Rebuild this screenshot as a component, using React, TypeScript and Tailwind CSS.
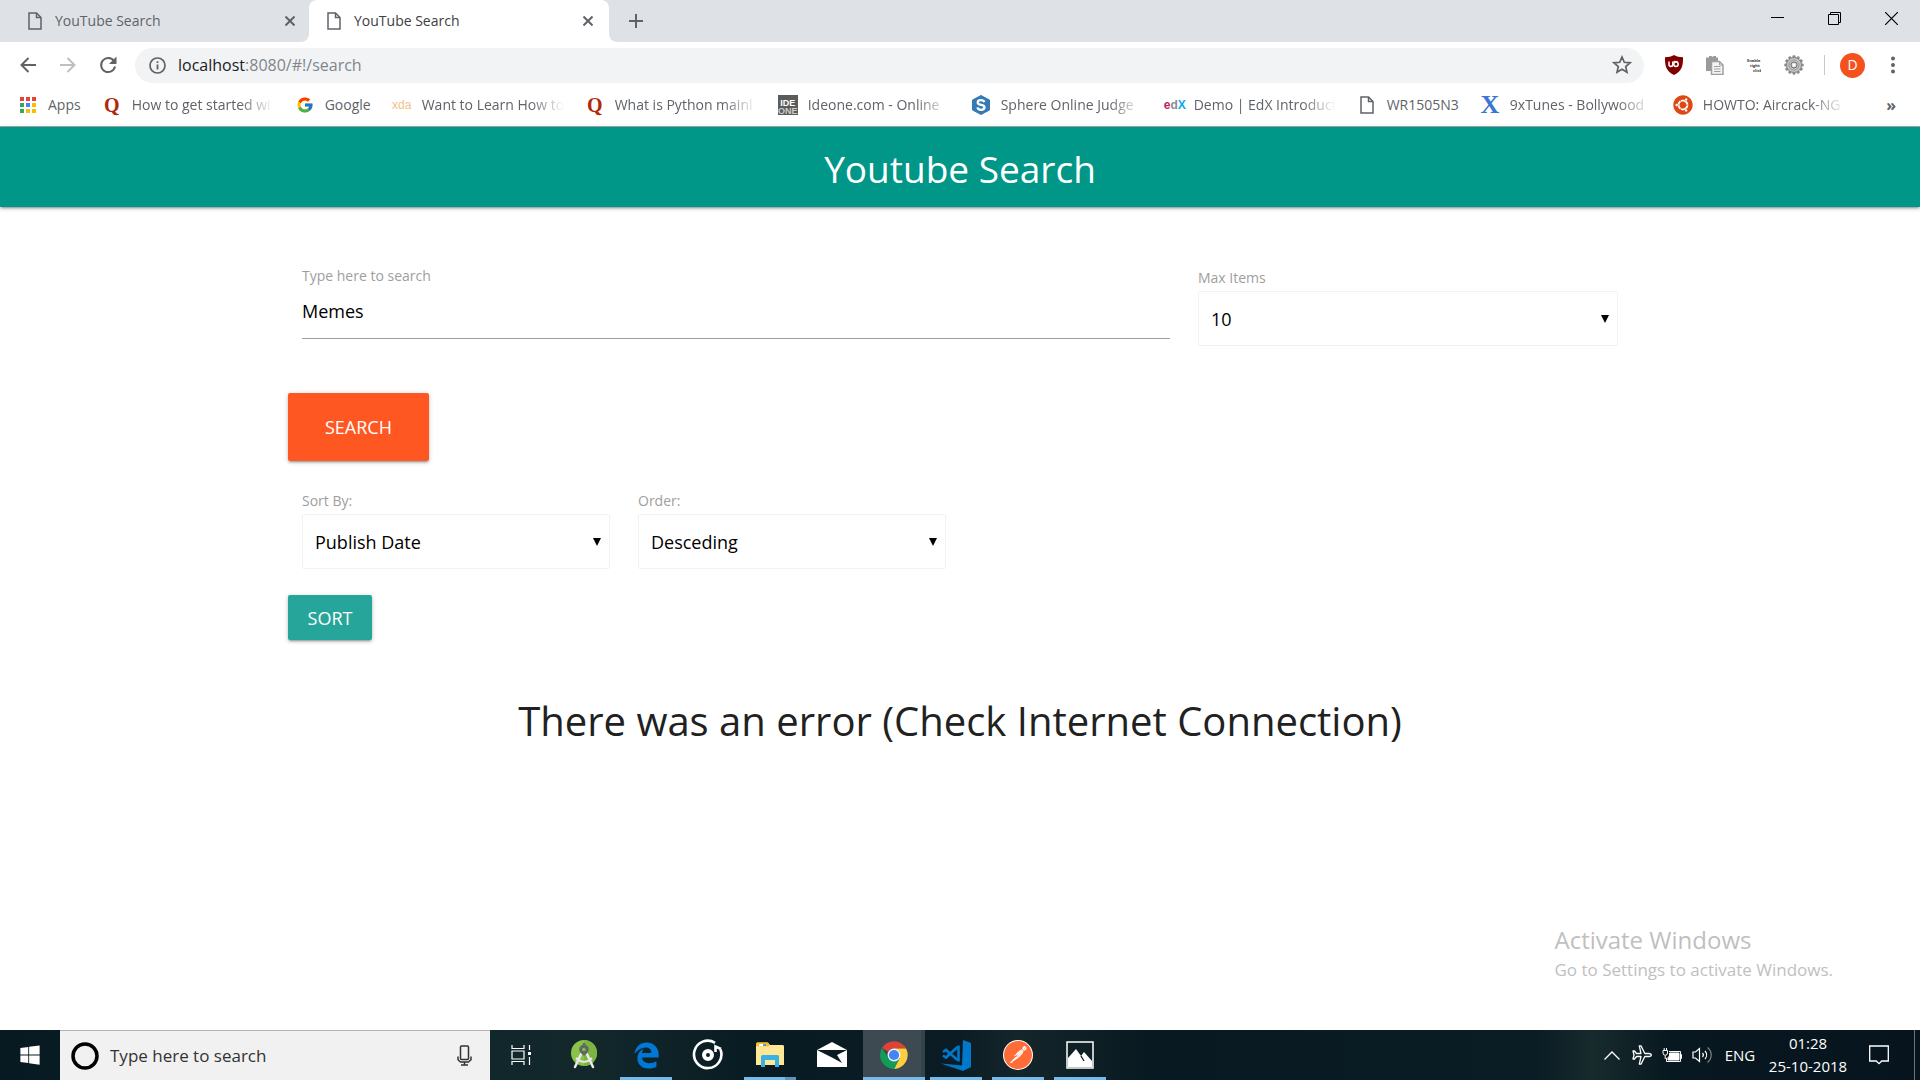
import type { ReactNode } from "react";
import { FcGoogle } from "react-icons/fc";
import { FaUbuntu, FaWindows } from "react-icons/fa";
import { FaEdgeLegacy } from "react-icons/fa6";
import { SiPostman } from "react-icons/si";

function FileIcon() {
  return (
    <svg width="14" height="18" viewBox="0 0 14 18" fill="none" stroke="#5f6368" strokeWidth="1.5">
      <path d="M1 1h7.5L13 5.5V17H1z" />
      <path d="M8.5 1v4.5H13" />
    </svg>
  );
}

function CloseIcon() {
  return (
    <svg width="10" height="10" viewBox="0 0 10 10" stroke="#5f6368" strokeWidth="2">
      <path d="M0.5 0.5l9 9M9.5 0.5l-9 9" />
    </svg>
  );
}

function Tab({ title, active }: { title: string; active?: boolean }) {
  return (
    <div
      className={
        active
          ? "relative flex h-full w-[300px] items-center rounded-t-lg bg-white pr-4 pl-[18px] text-[#3c4043]"
          : "flex h-full w-[300px] items-center pr-[14px] pl-[19px] text-[#5f6368]"
      }
    >
      {active && (
        <>
          <svg className="absolute bottom-0 -left-2" width="8" height="8" viewBox="0 0 8 8">
            <path d="M8 0v8H0a8 8 0 0 0 8-8z" fill="#fff" />
          </svg>
          <svg className="absolute -right-2 bottom-0" width="8" height="8" viewBox="0 0 8 8">
            <path d="M0 0v8h8a8 8 0 0 1-8-8z" fill="#fff" />
          </svg>
        </>
      )}
      <FileIcon />
      <span className="ml-[13px] flex-1">{title}</span>
      <button aria-label="Close tab">
        <CloseIcon />
      </button>
    </div>
  );
}

function TitleBar() {
  return (
    <header className="flex h-[42px] justify-between bg-[#dee1e6] pl-[9px] text-sm">
      <div className="flex">
        <Tab title="YouTube Search" />
        <Tab title="YouTube Search" active />
        <button aria-label="New tab" className="ml-5">
          <svg width="14" height="14" viewBox="0 0 14 14" stroke="#5f6368" strokeWidth="2">
            <path d="M7 0v14M0 7h14" />
          </svg>
        </button>
      </div>
      <div className="flex h-9">
        <button aria-label="Minimize" className="grid w-[57px] place-items-center">
          <svg width="13" height="13" viewBox="0 0 13 13" stroke="#000">
            <path d="M0 5.5h13" />
          </svg>
        </button>
        <button aria-label="Restore" className="grid w-[57px] place-items-center">
          <svg width="13" height="13" viewBox="0 0 13 13" fill="none" stroke="#000">
            <path d="M0.5 2.5h10v10h-10zM2.5 2.5v-2h10v10h-2" />
          </svg>
        </button>
        <button aria-label="Close" className="grid w-[57px] place-items-center">
          <svg width="13" height="13" viewBox="0 0 13 13" stroke="#000" strokeWidth="1.2">
            <path d="M0 0l13 13M13 0L0 13" />
          </svg>
        </button>
      </div>
    </header>
  );
}

function ToolButton({ label, children }: { label: string; children: ReactNode }) {
  return (
    <button aria-label={label} className="grid h-9 w-10 place-items-center">
      {children}
    </button>
  );
}

function Shield() {
  return (
    <svg width="20" height="20" viewBox="0 0 20 20">
      <path d="M10 0c2.500 1.600 5.500 2.200 9 2.200 0.200 8-0.800 13.800-9 17.800C1.800 16 0.800 10.200 1 2.200 4.500 2.200 7.500 1.600 10 0z" fill="#800000" />
      <path d="M5 6.500v3a1.900 1.900 0 0 0 3.800 0V6.500" fill="none" stroke="#fff" strokeWidth="1.500" />
      <circle cx="12" cy="9.200" r="2.200" fill="none" stroke="#fff" strokeWidth="1.500" />
      <path d="M9.500 6.500h4" stroke="#fff" strokeWidth="1.200" />
    </svg>
  );
}

function Clipboards() {
  return (
    <svg width="19" height="20" viewBox="0 0 19 20">
      <path d="M1 2.500h3V1h2.500l1 1 1-1H11v1.500h2V6H6v10H1z" fill="#9a9a9a" />
      <path d="M6.500 6.500h8l3.500 3.500v9.500H6.500z" fill="#f4f4f4" stroke="#a0a0a0" strokeWidth="1.500" />
      <path d="M14.500 6.500V10H18" fill="none" stroke="#a0a0a0" />
      <path d="M9 11.500h6.500M9 14h6.500M9 16.500h6.500" stroke="#a0a0a0" />
    </svg>
  );
}

const TEETH = [0, 30, 60, 90, 120, 150, 180, 210, 240, 270, 300, 330];

function Gear() {
  return (
    <svg width="20" height="20" viewBox="0 0 20 20">
      {TEETH.map((a) => (
        <rect key={a} x="8.500" y="0.300" width="3" height="4" rx="1" fill="#8c8c8c" transform={`rotate(${a} 10 10)`} />
      ))}
      <circle cx="10" cy="10" r="7.500" fill="#c4c4c4" stroke="#868686" />
      <circle cx="10" cy="10" r="5" fill="none" stroke="#9a9a9a" />
      <circle cx="10" cy="10" r="3" fill="#ddd" stroke="#6f6f6f" />
      <circle cx="10" cy="10" r="1.300" fill="#fff" />
    </svg>
  );
}

function Toolbar() {
  return (
    <div className="flex h-[46px] items-center pl-2">
      <ToolButton label="Back">
        <svg width="16" height="16" viewBox="0 0 16 16" fill="none" stroke="#5f6368" strokeWidth="2">
          <path d="M16 8H1.500M8.500 1L1.500 8l7 7" />
        </svg>
      </ToolButton>
      <ToolButton label="Forward">
        <svg width="16" height="16" viewBox="0 0 16 16" fill="none" stroke="#bdc0c3" strokeWidth="2">
          <path d="M0 8h14.500M7.500 1l7 7-7 7" />
        </svg>
      </ToolButton>
      <ToolButton label="Reload">
        <svg width="18" height="18" viewBox="0 0 18 18">
          <path d="M15 5.200A7 7 0 1 0 16 10.500" fill="none" stroke="#5f6368" strokeWidth="2" />
          <path d="M17.500 0.500v7.500H10z" fill="#5f6368" />
        </svg>
      </ToolButton>
      <div className="ml-[7px] flex h-[35px] flex-1 items-center rounded-full bg-[#f1f3f4] pr-3 pl-[14px]">
        <svg width="17" height="17" viewBox="0 0 17 17" fill="none" stroke="#5f6368">
          <circle cx="8.500" cy="8.500" r="7.500" strokeWidth="1.700" />
          <path d="M8.500 7.500v5M8.500 4.200V6" strokeWidth="1.800" />
        </svg>
        <div className="ml-3 flex-1 text-base text-[#80868b]">
          <span className="text-[#202124]">localhost</span>:8080/#!/search
        </div>
        <button aria-label="Bookmark this page">
          <svg width="20" height="20" viewBox="0 0 20 20" fill="none" stroke="#5f6368" strokeWidth="1.700">
            <path d="M10 2l2.300 5.300 5.700.5-4.300 3.800 1.300 5.700-5-3-5 3 1.300-5.700L2 7.800l5.700-.5z" />
          </svg>
        </button>
      </div>
      <div className="ml-[10px] flex items-center">
        <ToolButton label="uBlock Origin">
          <Shield />
        </ToolButton>
        <ToolButton label="Copy">
          <Clipboards />
        </ToolButton>
        <ToolButton label="Enable right click">
          <svg width="14" height="15" viewBox="0 0 14 15" fill="#333">
            <text x="0" y="4" fontSize="4" fontWeight="700">Enable</text>
            <text x="3" y="9" fontSize="4" fontWeight="700">right</text>
            <text x="6" y="14" fontSize="4" fontWeight="700">click</text>
          </svg>
        </ToolButton>
        <ToolButton label="Settings extension">
          <Gear />
        </ToolButton>
      </div>
      <div className="ml-[10px] h-5 w-px bg-[#c6c9cc]" />
      <button aria-label="Profile" className="ml-[15px] grid size-[25px] place-items-center rounded-full bg-[#f4511e] text-sm text-white">
        D
      </button>
      <button aria-label="Menu" className="mr-[25px] ml-[26px]">
        <svg width="4" height="18" viewBox="0 0 4 18" fill="#5f6368">
          <circle cx="2" cy="2.500" r="2" />
          <circle cx="2" cy="9" r="2" />
          <circle cx="2" cy="15.500" r="2" />
        </svg>
      </button>
    </div>
  );
}

function Bookmark({ icon, text, cut }: { icon: ReactNode; text: string; cut?: boolean }) {
  return (
    <a href="#" className="flex shrink-0 items-center gap-[10px]">
      <span className="grid h-5 w-5 place-items-center">{icon}</span>
      <span
        className={
          cut
            ? "w-[142px] overflow-hidden whitespace-nowrap [mask-image:linear-gradient(to_right,black_108px,transparent_142px)]"
            : "whitespace-nowrap"
        }
      >
        {text}
      </span>
    </a>
  );
}

const APP_DOTS = ["#ea4335", "#ea4335", "#ea4335", "#34a853", "#4285f4", "#fbbc05", "#34a853", "#fbbc05", "#fbbc05"];

function AppsIcon() {
  return (
    <svg width="16" height="16" viewBox="0 0 16 16">
      {APP_DOTS.map((c, i) => (
        <rect key={i} x={(i % 3) * 6} y={Math.floor(i / 3) * 6} width="4" height="4" fill={c} />
      ))}
    </svg>
  );
}

function Quora() {
  return <span className="font-['Liberation_Serif',serif] text-xl leading-5 font-bold text-[#b1290b]">Q</span>;
}

function Bookmarks() {
  return (
    <nav className="flex h-[39px] items-center justify-between border-b border-[#a5a9ab] bg-white pr-6 pb-1 pl-[18px] text-sm text-[#5f6368]">
      <div className="flex gap-[21px]">
        <Bookmark icon={<AppsIcon />} text="Apps" />
        <Bookmark icon={<Quora />} text="How to get started wi" cut />
        <Bookmark icon={<FcGoogle size={18} />} text="Google" />
        <Bookmark
          icon={<span className="font-['Liberation_Sans',sans-serif] text-xs leading-5 text-[#f5c08a]">xda</span>}
          text="Want to Learn How to"
          cut
        />
        <Bookmark icon={<Quora />} text="What is Python mainl" cut />
        <Bookmark
          icon={
            <span className="flex size-5 flex-col items-center justify-end bg-[#5b5b5b] font-['Liberation_Sans',sans-serif] text-[9px] leading-[8px] font-bold text-white">
              <span>IDE</span>
              <span className="text-[#ccc]">ONE</span>
            </span>
          }
          text="Ideone.com - Online"
          cut
        />
        <Bookmark
          icon={
            <svg width="20" height="20" viewBox="0 0 20 20">
              <path d="M10 0.500l8.500 4.500v10L10 19.500 1.500 15V5z" fill="#337ab7" stroke="#337ab7" strokeLinejoin="round" />
              <path d="M13.300 7.200c-.5-1.500-1.700-2-3.300-2-2 0-3.300.9-3.300 2.300 0 3.300 6.800 1.400 6.800 4.800 0 1.500-1.400 2.500-3.500 2.500-1.800 0-3.200-.7-3.500-2.400" fill="none" stroke="#fff" strokeWidth="2.300" />
            </svg>
          }
          text="Sphere Online Judge"
          cut
        />
        <Bookmark
          icon={
            <span className="font-['Liberation_Sans',sans-serif] text-xs leading-5 font-bold">
              <span className="text-[#b72667]">e</span>
              <span className="text-[#8a8c8f]">d</span>
              <span className="text-[#0ea6e9]">X</span>
            </span>
          }
          text="Demo | EdX Introduct"
          cut
        />
        <Bookmark icon={<FileIcon />} text="WR1505N3" />
        <Bookmark
          icon={
            <span className="font-['Liberation_Serif',serif] text-[26px] leading-5 font-bold text-[#3a76d6]">X</span>
          }
          text="9xTunes - Bollywood"
          cut
        />
        <Bookmark icon={<FaUbuntu size={20} color="#dd4814" />} text="HOWTO: Aircrack-NG" cut />
      </div>
      <button aria-label="More bookmarks" className="text-base font-bold">
        »
      </button>
    </nav>
  );
}

function SelectField({ id, label, options }: { id: string; label: string; options: string[] }) {
  return (
    <div>
      <label htmlFor={id} className="block text-sm leading-5 text-[#9e9e9e]">
        {label}
      </label>
      <div className="relative mt-[3px]">
        <select
          id={id}
          className="h-[55px] w-full appearance-none rounded-xs border border-[#f2f2f2] bg-white px-3 text-lg text-black"
        >
          {options.map((o) => (
            <option key={o}>{o}</option>
          ))}
        </select>
        <svg className="pointer-events-none absolute top-6 right-[9px]" width="8" height="8" viewBox="0 0 8 8">
          <path d="M0 0h8L4 8z" />
        </svg>
      </div>
    </div>
  );
}

const RAISED = "rounded-xs text-white uppercase shadow-[0_2px_2px_rgba(0,0,0,0.14),0_3px_1px_-2px_rgba(0,0,0,0.12),0_1px_5px_rgba(0,0,0,0.2)]";

function SearchPage() {
  return (
    <div className="relative flex-1 bg-white">
      <div className="relative grid h-20 place-items-center bg-[#009688] pt-1 shadow-[0_2px_2px_rgba(0,0,0,0.14),0_3px_1px_-2px_rgba(0,0,0,0.12),0_1px_5px_rgba(0,0,0,0.2)]">
        <h1 className="text-[37px] leading-10 text-white">Youtube Search</h1>
      </div>
      <main className="mx-auto w-[70%] pt-[59px]">
        <div className="grid grid-cols-12">
          <div className="col-span-8 px-[14px]">
            <label htmlFor="query" className="block text-sm leading-5 text-[#9e9e9e]">
              Type here to search
            </label>
            <input
              id="query"
              defaultValue="Memes"
              className="block h-[53px] w-full border-b border-[#9e9e9e] pb-[3px] text-lg text-black outline-none"
            />
          </div>
          <div className="col-span-4 px-[14px] pt-[2px]">
            <SelectField id="max" label="Max Items" options={["10", "20", "50"]} />
          </div>
        </div>
        <button className={`mt-[47px] block h-[68px] w-[141px] bg-[#ff5722] text-lg ${RAISED}`}>Search</button>
        <div className="mt-[30px] grid grid-cols-4">
          <div className="px-[14px]">
            <SelectField id="sort" label="Sort By:" options={["Publish Date", "Title"]} />
          </div>
          <div className="px-[14px]">
            <SelectField id="order" label="Order:" options={["Desceding", "Ascending"]} />
          </div>
        </div>
        <button className={`mt-[26px] block h-[45px] w-[84px] bg-[#26a69a] text-lg ${RAISED}`}>Sort</button>
        <h2 className="mt-14 text-center text-[40px] leading-[50px] text-[#212121]">
          There was an error (Check Internet Connection)
        </h2>
      </main>
      <div className="absolute right-[87px] bottom-[46px] text-[#bfbfbf]">
        <p className="text-2xl leading-8">Activate Windows</p>
        <p className="text-[17px] leading-7">Go to Settings to activate Windows.</p>
      </div>
    </div>
  );
}

function TaskApp({ label, running, multiple, active, children }: {
  label: string;
  running?: boolean;
  multiple?: boolean;
  active?: boolean;
  children: ReactNode;
}) {
  return (
    <button
      aria-label={label}
      className={
        active
          ? "relative grid w-[62px] place-items-center border-r-4 border-[#34424a] bg-[#3d4a52] pl-1"
          : "relative grid w-[62px] place-items-center"
      }
    >
      {children}
      {running && (
        <span className={active ? "absolute bottom-0 left-0 -right-1 flex h-[3px] bg-[#76b9ed]" : "absolute inset-x-[5px] bottom-0 flex h-[3px] justify-end bg-[#76b9ed]"}>
          {multiple && <span className="w-[11px] bg-[#5f93bb]" />}
        </span>
      )}
    </button>
  );
}

function AndroidStudio() {
  return (
    <svg width="28" height="32" viewBox="0 0 28 32">
      <circle cx="14" cy="14" r="13" fill="#8bc34a" />
      <path d="M14 1a13 13 0 0 1 0 26z" fill="#7cb342" />
      <path d="M12 13L5 28M16 13l7 15" stroke="#e8e8e8" strokeWidth="2.500" strokeLinecap="round" />
      <path d="M6 19c5 5 11 5 16 0" fill="none" stroke="#e8e8e8" strokeWidth="2" />
      <circle cx="14" cy="10.500" r="3.300" fill="none" stroke="#5c6a60" strokeWidth="3" />
      <path d="M14 4v3" stroke="#5c6a60" strokeWidth="2.500" />
      <path d="M11 14l3 3 3-3" fill="#5c6a60" />
    </svg>
  );
}

function Groove() {
  return (
    <svg width="32" height="32" viewBox="0 0 32 32" fill="none" stroke="#fff">
      <path d="M23 3.800A13.700 13.700 0 1 0 28.500 10.500" strokeWidth="2.600" />
      <path d="M23.500 13V7.500l5.500 2.500" strokeWidth="2.600" />
      <circle cx="16" cy="16" r="4" strokeWidth="4" />
    </svg>
  );
}

function Explorer() {
  return (
    <svg width="28" height="26" viewBox="0 0 28 26">
      <path d="M0 2a1.500 1.500 0 0 1 1.500-1.500H12L14 3h12.500A1.500 1.500 0 0 1 28 4.500V23H0z" fill="#ffe796" />
      <path d="M0 4V2A1.500 1.500 0 0 1 1.500.5h10L13.500 3 12 4.500z" fill="#f9bd1a" />
      <path d="M3 2h6v2H3z" fill="#fff" />
      <path d="M7 2h3v2H7z" fill="#4aa4dc" />
      <path d="M5 25V14.500A1.500 1.500 0 0 1 6.500 13h15a1.500 1.500 0 0 1 1.500 1.500V25h-4v-7H9v7z" fill="#38b1e4" />
    </svg>
  );
}

function Mail() {
  return (
    <svg width="30" height="28" viewBox="0 0 30 28" fill="#fff">
      <path d="M0 9L15 1l15 8H0z" />
      <path d="M0 9l16 8 9 5-5-8 10-5v17H0z" />
    </svg>
  );
}

function Chrome() {
  return (
    <svg width="28" height="28" viewBox="0 0 28 28">
      <path d="M14 14L1.900 7A14 14 0 0 1 26.100 7.500H14z" fill="#db4437" />
      <path d="M26.100 7.500A14 14 0 0 1 14 28l5.600-10.800L14 7.500z" fill="#ffcd40" />
      <path d="M1.900 7A14 14 0 0 0 14 28l5.600-10.800L8.400 17.200z" fill="#0f9d58" />
      <circle cx="14" cy="14" r="6.500" fill="#f1f1f1" />
      <circle cx="14" cy="14" r="5.100" fill="#4285f4" />
    </svg>
  );
}

function VsCode() {
  return (
    <svg width="30" height="31" viewBox="0 0 30 31">
      <path d="M22 0l8 3v24l-8 4L0 23.500l21 2z" fill="#0079cc" />
      <path d="M16.500 7L5 17.500l-3-2M16.500 20L5 10l-3 2" fill="none" stroke="#0079cc" strokeWidth="2.600" />
      <path d="M17.500 5.500v16" stroke="#0079cc" strokeWidth="2.600" />
    </svg>
  );
}

function Taskbar() {
  return (
    <footer className="flex h-[50px] bg-[linear-gradient(to_right,#071921,#11262b_22%,#12282b_31%,#081a22_40%,#0b1c24_50%,#14262a_53%,#081921_60%,#0a1c24_80%,#172a2c_83%,#081820_87%,#07141d)] text-[15px] text-white">
      <button aria-label="Start" className="grid w-[60px] place-items-center">
        <FaWindows size={22} />
      </button>
      <label className="flex w-[430px] items-center border-t border-[#b5b5b5] bg-[#f1f1f1] pr-[18px] pl-[11px]">
        <svg width="28" height="28" viewBox="0 0 28 28" fill="none">
          <circle cx="14" cy="14" r="12" stroke="#000" strokeWidth="3.500" />
        </svg>
        <input
          aria-label="Taskbar search"
          placeholder="Type here to search"
          className="ml-[11px] min-w-0 flex-1 text-[17px] outline-none placeholder:text-[#333]"
        />
        <svg width="15" height="21" viewBox="0 0 15 21" fill="none" stroke="#333" strokeWidth="1.500">
          <rect x="3.500" y="1" width="8" height="13.500" rx="1" />
          <path d="M1 11.500v3.200L3.500 17h8l2.500-2.300v-3.200M7.500 17v3M4 20h7" />
        </svg>
      </label>
      <button aria-label="Task view" className="grid w-[63px] place-items-center">
        <svg width="21" height="20" viewBox="0 0 21 20" fill="none" stroke="#fff" strokeWidth="1.200">
          <path d="M1 0v3.500h12V0M1 20v-3.500h12V20M1 6h12v8H1zM18.500 0v5M18.500 12v8" />
          <path d="M17 7h3v3h-3z" fill="#fff" stroke="none" />
        </svg>
      </button>
      <TaskApp label="Android Studio">
        <AndroidStudio />
      </TaskApp>
      <TaskApp label="Edge" running>
        <FaEdgeLegacy size={27} color="#0078d7" />
      </TaskApp>
      <TaskApp label="Groove Music">
        <Groove />
      </TaskApp>
      <TaskApp label="File Explorer" running multiple>
        <Explorer />
      </TaskApp>
      <TaskApp label="Mail">
        <Mail />
      </TaskApp>
      <TaskApp label="Chrome" running active>
        <Chrome />
      </TaskApp>
      <TaskApp label="Visual Studio Code" running>
        <VsCode />
      </TaskApp>
      <TaskApp label="Postman" running>
        <span className="grid size-[30px] place-items-center rounded-full bg-white">
          <SiPostman size={28} color="#ff6c37" />
        </span>
      </TaskApp>
      <TaskApp label="Photos" running>
        <svg width="28" height="28" viewBox="0 0 28 28">
          <path d="M1 1h26v26H1z" fill="none" stroke="#fff" strokeWidth="1.500" />
          <path d="M2 26V17L10 8l5 7 3-4 8 9v6z" fill="#fff" />
          <path d="M15 15l3 5" stroke="#0b1c24" strokeWidth="1.300" />
        </svg>
      </TaskApp>
      <div className="ml-auto flex">
        <button aria-label="Show hidden icons" className="grid w-[30px] place-items-center">
          <svg width="16" height="9" viewBox="0 0 16 9" fill="none" stroke="#fff" strokeWidth="1.300">
            <path d="M0.500 8.500L8 1l7.500 7.500" />
          </svg>
        </button>
        <button aria-label="Airplane mode" className="grid w-[30px] place-items-center">
          <svg width="20" height="20" viewBox="0 0 20 20" fill="none" stroke="#fff" strokeWidth="1.300" strokeLinejoin="round">
            <path d="M19.300 10c0-1-1-1.500-2.500-1.500h-4L9 .8H7.300l1.700 7.700H4.500L2.500 6H1l1 4-1 4h1.500l2-2.500H9l-1.700 7.700H9l3.800-7.700h4c1.500 0 2.500-.5 2.500-1.500z" />
          </svg>
        </button>
        <button aria-label="Battery" className="grid w-[30px] place-items-center">
          <svg width="20" height="15" viewBox="0 0 20 15" fill="none" stroke="#fff" strokeWidth="1">
            <path d="M7 3.500h11.500v10H4.500V10M18.500 6.500h1v4h-1" />
            <path d="M7.500 5H17v7H6V9.500L7.500 8z" fill="#fff" />
            <path d="M1 2.500h4.500v2.500a2.200 2.200 0 0 1-4.500 0zM2.200 0v2.500M4.500 0v2.500M3.200 7.500V11" />
          </svg>
        </button>
        <button aria-label="Volume" className="grid w-[30px] place-items-center">
          <svg width="20" height="18" viewBox="0 0 20 18" fill="none" stroke="#fff" strokeWidth="1.200">
            <path d="M1 6h2.500L7.500 2.500v13L3.500 12H1z" />
            <path d="M10.500 7a3 3 0 0 1 0 4M13 5a6 6 0 0 1 0 8" />
            <path d="M15.500 1.500a9.500 9.500 0 0 1 0 15" stroke="#7b868b" />
          </svg>
        </button>
        <button className="w-[46px]">ENG</button>
        <button className="w-[90px] text-center leading-[23px]">
          <span className="block">01:28</span>
          <span className="block">25-10-2018</span>
        </button>
        <button aria-label="Notifications" className="mr-[9px] grid w-[52px] place-items-center">
          <svg width="20" height="20" viewBox="0 0 20 20" fill="none" stroke="#fff" strokeWidth="1.300">
            <path d="M0.700 1h18.600v15h-6.600L10 18.700 7.300 16H0.700z" />
          </svg>
        </button>
        <button aria-label="Show desktop" className="w-[6px] border-l border-[#6b757a]" />
      </div>
    </footer>
  );
}

export default function App() {
  return (
    <div className="flex min-h-screen flex-col bg-white font-['Open_Sans',sans-serif]">
      <TitleBar />
      <Toolbar />
      <Bookmarks />
      <SearchPage />
      <Taskbar />
    </div>
  );
}
